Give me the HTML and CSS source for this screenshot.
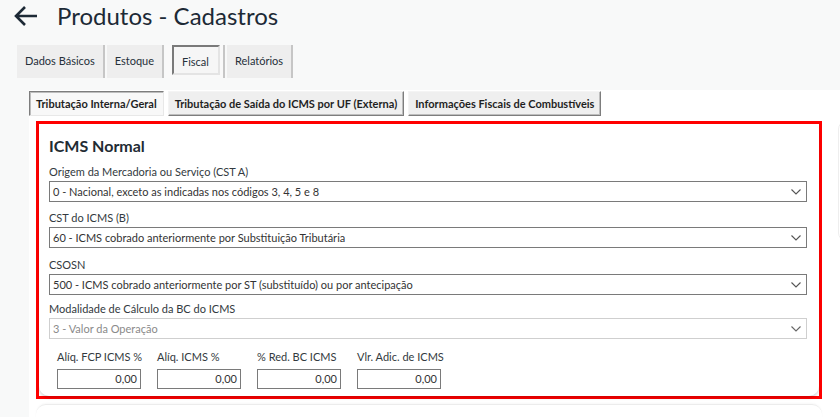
FILE: index.html
```html
<!DOCTYPE html>
<html lang="pt-BR">
<head>
<meta charset="utf-8">
<title>Produtos - Cadastros</title>
<link rel="stylesheet" href="styles.css">
</head>
<body>
<div class="page">
  <header class="header">
    <svg class="back" width="24" height="22" viewBox="0 0 24 22" aria-hidden="true">
      <path d="M23 11H2.5M11 2L2 11l9 9" fill="none" stroke="#1d2a36" stroke-width="2.6" stroke-linecap="butt" stroke-linejoin="miter"/>
    </svg>
    <h1 class="title">Produtos - Cadastros</h1>
  </header>

  <nav class="tabs">
    <div class="tab">Dados Básicos</div>
    <div class="tab">Estoque</div>
    <div class="tab tab-active"><span class="tab-inset">Fiscal</span></div>
    <div class="tab">Relatórios</div>
  </nav>

  <main class="panel">
    <div class="subtabs">
      <div class="subtab subtab-active">Tributação Interna/Geral</div>
      <div class="subtab">Tributação de Saída do ICMS por UF (Externa)</div>
      <div class="subtab">Informações Fiscais de Combustíveis</div>
    </div>

    <div class="content">
      <div class="main-col">
        <div class="highlight">
          <section class="card">
            <h2 class="card-title">ICMS Normal</h2>

            <div class="field">
              <div class="label">Origem da Mercadoria ou Serviço (CST A)</div>
              <div class="select">
                <span>0 - Nacional, exceto as indicadas nos códigos 3, 4, 5 e 8</span>
                <svg class="chev" width="10" height="6" viewBox="0 0 10 6"><path d="M0.5 0.5L5 5l4.5-4.5" fill="none" stroke="#555" stroke-width="1.1"/></svg>
              </div>
            </div>

            <div class="field">
              <div class="label">CST do ICMS (B)</div>
              <div class="select">
                <span>60 - ICMS cobrado anteriormente por Substituição Tributária</span>
                <svg class="chev" width="10" height="6" viewBox="0 0 10 6"><path d="M0.5 0.5L5 5l4.5-4.5" fill="none" stroke="#555" stroke-width="1.1"/></svg>
              </div>
            </div>

            <div class="field field-csosn">
              <div class="label">CSOSN</div>
              <div class="select">
                <span>500 - ICMS cobrado anteriormente por ST (substituído) ou por antecipação</span>
                <svg class="chev" width="10" height="6" viewBox="0 0 10 6"><path d="M0.5 0.5L5 5l4.5-4.5" fill="none" stroke="#555" stroke-width="1.1"/></svg>
              </div>
            </div>

            <div class="field field-mod">
              <div class="label">Modalidade de Cálculo da BC do ICMS</div>
              <div class="select select-disabled">
                <span>3 - Valor da Operação</span>
                <svg class="chev" width="10" height="6" viewBox="0 0 10 6"><path d="M0.5 0.5L5 5l4.5-4.5" fill="none" stroke="#666" stroke-width="1.1"/></svg>
              </div>
            </div>

            <div class="numbers">
              <div class="num">
                <div class="label">Alíq. FCP ICMS %</div>
                <div class="num-input">0,00</div>
              </div>
              <div class="num">
                <div class="label">Alíq. ICMS %</div>
                <div class="num-input">0,00</div>
              </div>
              <div class="num">
                <div class="label">% Red. BC ICMS</div>
                <div class="num-input">0,00</div>
              </div>
              <div class="num">
                <div class="label">Vlr. Adic. de ICMS</div>
                <div class="num-input">0,00</div>
              </div>
            </div>
          </section>
        </div>
        <div class="next-card"></div>
      </div>
      <div class="side-col">
        <div class="side-card"></div>
      </div>
    </div>
  </main>
</div>
</body>
</html>
```

FILE: styles.css
```css
* { box-sizing: border-box; }

html, body {
  margin: 0;
  padding: 0;
  background: #f8f9f9;
  overflow: hidden;
  font-family: Lato, "Open Sans", sans-serif;
  color: #333;
}

.page {
  width: 840px;
  height: 417px;
  overflow: hidden;
}

.header {
  display: flex;
  align-items: center;
  height: 31px;
  padding-left: 14px;
}

.back {
  display: block;
}

.title {
  margin: 0 0 0 19px;
  font-weight: 400;
  font-size: 24px;
  line-height: 30px;
  color: #1d2a36;
}

.tabs {
  display: flex;
  margin: 14px 0 0 17px;
  height: 33px;
}

.tab {
  display: flex;
  align-items: center;
  padding: 0 8px 2px 8px;
  height: 33px;
  background: #eeeeee;
  border-right: 2px solid #c6c6c6;
  margin-right: 2px;
  font-size: 11px;
  color: #26303a;
}

.tab-active {
  background: #f9f9f9;
  padding: 0 3px 0 6px;
  align-items: flex-start;
}

.tab-inset {
  display: flex;
  align-items: center;
  height: 30px;
  padding: 3px 9px 0 8px;
  border: 2px solid;
  border-color: #7a7a7a #e4e4e4 #e4e4e4 #7a7a7a;
  background: #f6f6f6;
}

.panel {
  margin: 12px 0 0 29px;
  background: #ffffff;
  height: 332px;
  padding-top: 1px;
}

.subtabs {
  display: flex;
  gap: 4px;
}

.subtab {
  height: 25px;
  display: flex;
  align-items: center;
  padding: 0 6px;
  font-size: 11px;
  font-weight: 700;
  color: #1f1f1f;
  background: #efefef;
  border: 1px solid;
  border-color: #f4f4f4 #7d7d7d #7d7d7d #f4f4f4;
  box-shadow: inset -1px -1px 0 #bdbdbd;
}

.subtab-active {
  background: #f8f8f8;
  border-color: #7d7d7d #e8e8e8 #e8e8e8 #7d7d7d;
  box-shadow: inset 1px 1px 0 #bdbdbd;
}

.content {
  display: flex;
  gap: 16px;
  margin-top: 5px;
}

.main-col {
  margin-left: 7px;
  width: 786px;
  flex: none;
}

.highlight {
  border: 3px solid #ff0000;
  height: 278px;
}

.card {
  height: 100%;
  border-radius: 0 8px 10px 10px;
  box-shadow: 0 2px 3px rgba(0, 0, 0, 0.16);
  padding: 12px 12px 0 10px;
  background: #fff;
}

.card-title {
  margin: 0;
  font-size: 16px;
  font-weight: 700;
  line-height: 20px;
  color: #222b33;
}

.field {
  margin-top: 8px;
}

.field-csosn { margin-top: 9px !important; }
.field-mod { margin-top: 6px !important; }

.label {
  font-size: 11px;
  line-height: 15px;
  color: #333a40;
  white-space: nowrap;
}

.select {
  margin-top: 2px;
  height: 21px;
  border: 1px solid #7a7a7a;
  display: flex;
  align-items: center;
  justify-content: space-between;
  padding: 0 5px 0 3px;
  font-size: 11px;
  color: #333;
  background: #fff;
}

.select-disabled {
  border-color: #cfcfcf;
  color: #8a8a8a;
}

.chev {
  display: block;
  margin-top: 1px;
}

.numbers {
  display: flex;
  gap: 16px;
  margin: 10px 0 0 8px;
}

.num {
  width: 84px;
}

.num-input {
  margin-top: 5px;
  width: 84px;
  height: 20px;
  border: 1px solid #7a7a7a;
  text-align: right;
  font-size: 11px;
  line-height: 18px;
  padding-right: 3px;
  color: #333;
}

.next-card {
  margin-top: 5px;
  height: 20px;
  border-radius: 10px 10px 0 0;
  border-top: 1px solid #ececec;
  box-shadow: 0 -1px 2px rgba(0, 0, 0, 0.03);
}

.side-col {
  flex: none;
  width: 200px;
}

.side-card {
  height: 120px;
  border-radius: 8px;
  border: 1px solid #eeeeee;
}
```
